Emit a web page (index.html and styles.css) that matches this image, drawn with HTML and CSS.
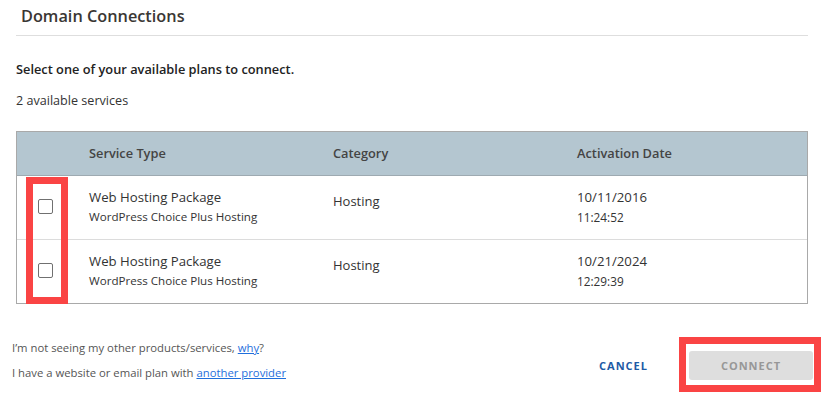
FILE: index.html
```html
<!DOCTYPE html>
<html lang="en">
<head>
<meta charset="utf-8">
<title>Domain Connections</title>
<link rel="stylesheet" href="styles.css">
</head>
<body>
<div class="page">
  <div class="content">
    <h1 class="title">Domain Connections</h1>
    <p class="lead">Select one of your available plans to connect.</p>
    <p class="count">2 available services</p>

    <div class="table">
      <div class="row head">
        <div class="cell"></div>
        <div class="cell">Service Type</div>
        <div class="cell">Category</div>
        <div class="cell">Activation Date</div>
      </div>
      <div class="row">
        <div class="cell check"><input type="checkbox" class="box"></div>
        <div class="cell"><div class="main">Web Hosting Package</div><div class="sub">WordPress Choice Plus Hosting</div></div>
        <div class="cell cat">Hosting</div>
        <div class="cell"><div class="main">10/11/2016</div><div class="sub time">11:24:52</div></div>
      </div>
      <div class="row last">
        <div class="cell check"><input type="checkbox" class="box"></div>
        <div class="cell"><div class="main">Web Hosting Package</div><div class="sub">WordPress Choice Plus Hosting</div></div>
        <div class="cell cat">Hosting</div>
        <div class="cell"><div class="main">10/21/2024</div><div class="sub time">12:29:39</div></div>
      </div>
      <div class="highlight hl-checks"></div>
    </div>
  </div>

  <div class="footer">
    <div class="notes">
      <p>I’m not seeing my other products/services, <a href="#">why</a>?</p>
      <p>I have a website or email plan with <a href="#">another provider</a></p>
    </div>
    <div class="actions">
      <button class="cancel" type="button">CANCEL</button>
      <div class="connect-wrap">
        <button class="connect" type="button" disabled>CONNECT</button>
        <div class="highlight hl-connect"></div>
      </div>
    </div>
  </div>
</div>
</body>
</html>
```

FILE: styles.css
```css
* { box-sizing: border-box; }
html, body { margin: 0; padding: 0; background: #fff; }
body {
  font-family: "Open Sans", "Noto Sans", sans-serif;
  color: #333;
  width: 825px;
  height: 395px;
  overflow: hidden;
}
.content { padding: 0 17px 0 16px; }
.title {
  margin: 0;
  font-size: 16.3px;
  line-height: 23px;
  font-weight: 600;
  color: #3a3734;
  padding: 5px 0 7px 5px;
  border-bottom: 1px solid #dedede;
}
.lead {
  margin: 0;
  padding-top: 24px;
  font-size: 12.8px;
  line-height: 18px;
  font-weight: 600;
  color: #222;
}
.count {
  margin: 0;
  padding-top: 14px;
  font-size: 12.6px;
  line-height: 18px;
  color: #333;
}
.table {
  position: relative;
  margin-top: 21px;
  border: 1px solid #a9a9a9;
}
.row {
  display: grid;
  grid-template-columns: 72px 244px 244px 1fr;
  border-bottom: 1px solid #dcdcdc;
  height: 64px;
}
.row.last { border-bottom: none; height: 63px; }
.row.head {
  background: #b4c6d0;
  border-bottom: 1px solid #9eaab1;
  height: 44px;
}
.head .cell {
  padding-top: 11px;
  font-size: 12.8px;
  line-height: 20px;
  font-weight: 600;
  color: #444;
}
.cell { padding-top: 11px; }
.main { font-size: 13.2px; line-height: 20px; color: #333; }
.sub { font-size: 11.6px; line-height: 20px; color: #333; }
.sub.time { font-size: 11.8px; }
.cat { padding-top: 15px; font-size: 13px; line-height: 20px; }
.check { padding: 23px 0 0 21px; }
.box {
  appearance: none;
  -webkit-appearance: none;
  display: block;
  margin: 0;
  width: 15px;
  height: 15px;
  border: 1px solid #707070;
  border-radius: 2px;
  background: #fff;
}
.highlight {
  position: absolute;
  border: 7px solid #fa4444;
  pointer-events: none;
}
.hl-checks { left: 9px; top: 45px; width: 42px; height: 127px; }
.footer {
  display: flex;
  justify-content: space-between;
  align-items: flex-start;
  padding: 31px 12px 0 12px;
}
.notes p {
  margin: 0;
  font-size: 11.3px;
  line-height: 25px;
  color: #555;
}
.notes a { color: #1f6fdc; text-decoration: underline; }
.actions {
  display: flex;
  align-items: center;
  gap: 25px;
  padding-top: 16px;
}
.cancel {
  border: none;
  background: none;
  font-family: inherit;
  font-size: 11px;
  font-weight: 700;
  letter-spacing: 1px;
  color: #1d5aa5;
  padding: 0 16px;
  height: 29px;
}
.connect-wrap { position: relative; }
.connect {
  display: block;
  width: 124px;
  height: 29px;
  border: none;
  border-radius: 3px;
  background: #dedede;
  font-family: inherit;
  font-size: 11px;
  font-weight: 700;
  letter-spacing: 1px;
  color: #979797;
  padding: 0;
}
.hl-connect { left: -10px; top: -14px; width: 142px; height: 55px; }
```
